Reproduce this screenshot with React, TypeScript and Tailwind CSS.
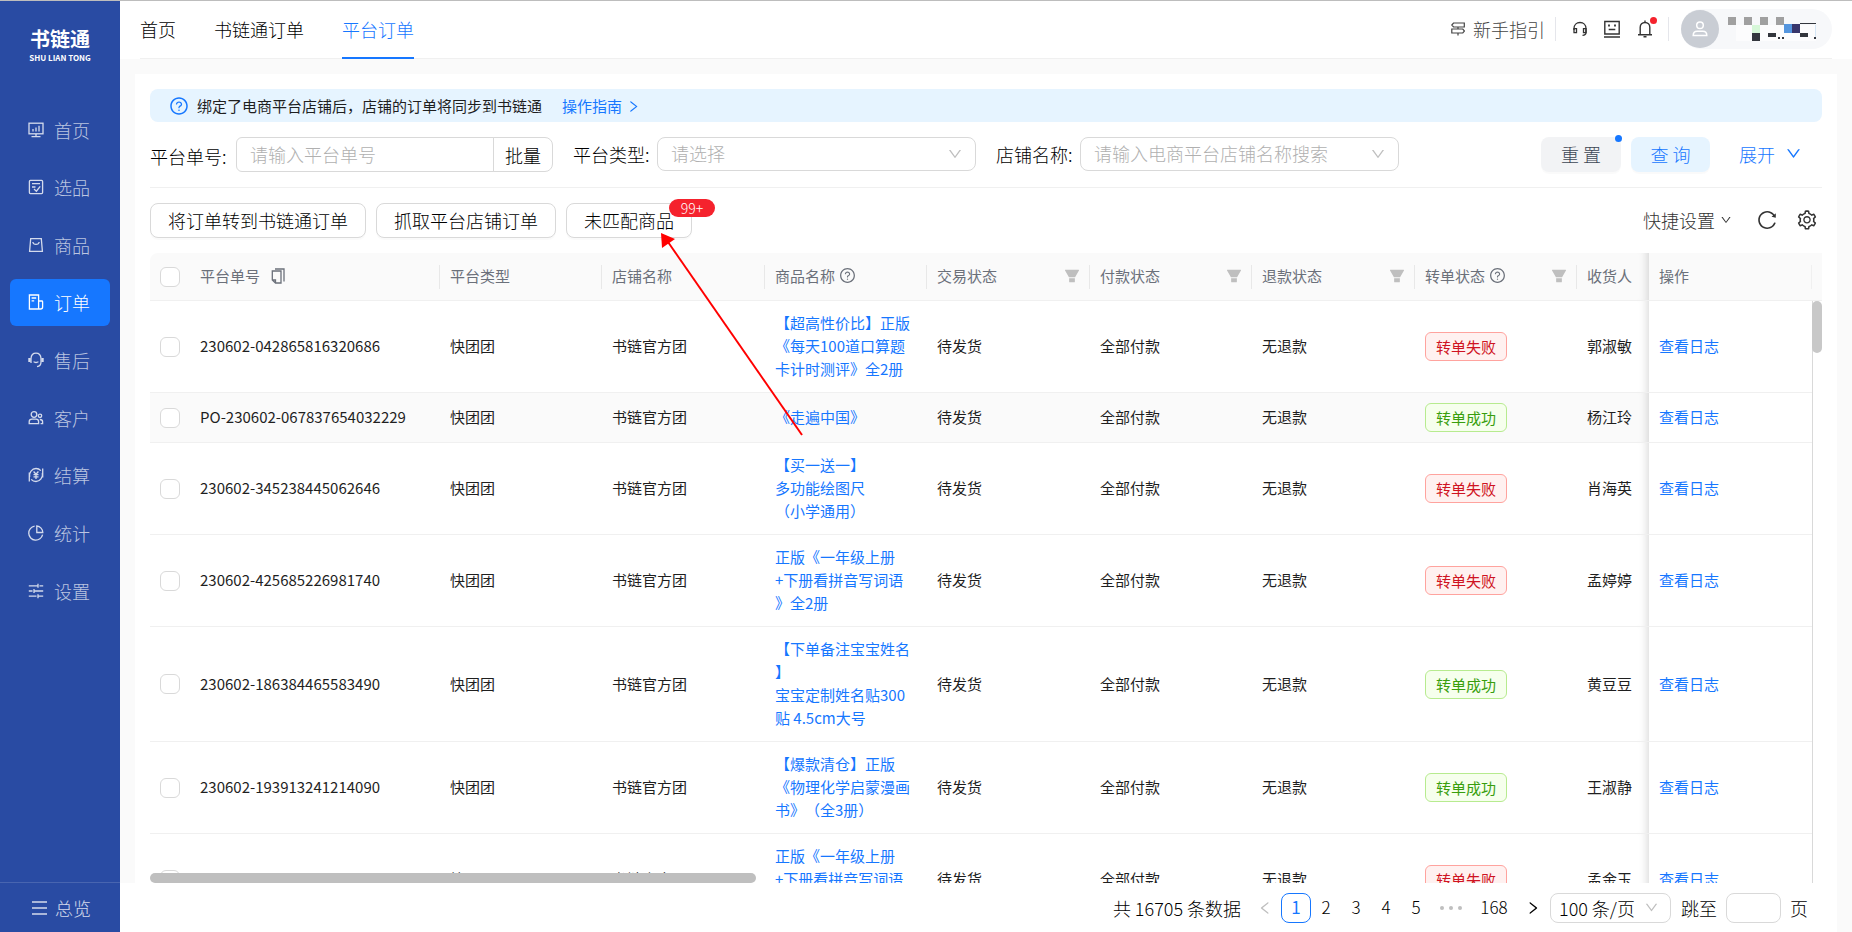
import { useState } from "react";
import type { ReactNode } from "react";
import {
  AiFillFilter,
  AiOutlineDown,
  AiOutlineLeft,
  AiOutlineQuestionCircle,
  AiOutlineReload,
  AiOutlineRight,
  AiOutlineSetting,
} from "react-icons/ai";

const svgProps = {
  width: 16,
  height: 16,
  viewBox: "0 0 16 16",
  fill: "none",
  stroke: "currentColor",
  strokeWidth: 1.3,
  "aria-hidden": true,
} as const;

// 侧边栏菜单
const MENUS: { label: string; icon: ReactNode }[] = [
  {
    label: "首页",
    icon: (
      <svg {...svgProps}>
        <rect x="1" y="1.2" width="14" height="10.6" />
        <path d="M5 9.5V7M8 9.5V5.5M11 9.5V3.8M8 12v2.5M3.5 14.7h9" />
      </svg>
    ),
  },
  {
    label: "选品",
    icon: (
      <svg {...svgProps}>
        <rect x="1.4" y="1.4" width="13.2" height="13.2" rx="1" />
        <path d="M4 4.7h8M4 8h3.5M6 10l2.4 2.2L12.2 7.4" />
      </svg>
    ),
  },
  {
    label: "商品",
    icon: (
      <svg {...svgProps}>
        <path d="M2.7 1.7h10.6l1.1 12.6H1.6zM4.8 5c.6 3.2 5.8 3.2 6.4 0" />
      </svg>
    ),
  },
  {
    label: "订单",
    icon: (
      <svg {...svgProps}>
        <path d="M1.4 1h9.2v14H1.4zM10.6 7h3.2c.5 0 .8.4.8.8V13c0 1.3-.8 2-2 2h-3M3.6 4h4.6M3.6 6.8h2.6" />
      </svg>
    ),
  },
  {
    label: "售后",
    icon: (
      <svg {...svgProps}>
        <path d="M3 11V6.5C3.2 3.5 5.2 1.2 8 1.2s4.8 2.3 5 5.3V10c0 2.8-1.6 4.3-4 4.6" />
        <path d="M1.4 6v4M14.6 6v4" strokeWidth="2.2" />
        <path d="M5.6 9.6c1.2 1.2 3.6 1.2 4.8 0" />
      </svg>
    ),
  },
  {
    label: "客户",
    icon: (
      <svg {...svgProps}>
        <circle cx="6" cy="4.5" r="2.8" />
        <path d="M1.2 13.6v-1.8c0-1.7 1.2-2.6 2.8-2.6h4c1.6 0 2.6.9 2.6 2.6v1.8z" />
        <circle cx="12" cy="5.8" r="1.7" />
        <path d="M11.8 9.5c1.8 0 2.8.8 2.8 2.2v1.9h-2" />
      </svg>
    ),
  },
  {
    label: "结算",
    icon: (
      <svg {...svgProps}>
        <path d="M1.3 5.5v9M1.6 10C.8 5.500 4 1.500 8 1.500c2 0 3.600.8 4.800 2.200M14.700 1.500v9M14.400 6c.8 4.500-2.400 8.500-6.400 8.500-2 0-3.600-.8-4.800-2.200" />
        <path d="M5.600 4.500 8 7.200l2.400-2.700M8 7.200V12M5.500 7.700h5M5.500 9.800h5" />
      </svg>
    ),
  },
  {
    label: "统计",
    icon: (
      <svg {...svgProps}>
        <path d="M6.6 1.2A7 7 0 1 0 14.6 9.6M8.8 1v6.5h6A6.6 6.6 0 0 0 8.8 1z" />
      </svg>
    ),
  },
  {
    label: "设置",
    icon: (
      <svg {...svgProps}>
        <path d="M.8 2.8h9M11.5 2.8h3.7M10 .8v4M.8 8h3.7M6.5 8h8.7M6 6v4M.8 13.2h7.7M10.5 13.2h4.7M10 11.2v4" />
      </svg>
    ),
  },
];

const TABS = ["首页", "书链通订单", "平台订单"];

type Order = {
  no: string;
  product: string[];
  ok: boolean;
  receiver: string;
};

const ORDERS: Order[] = [
  { no: "230602-042865816320686", product: ["【超高性价比】正版", "《每天100道口算题", "卡计时测评》全2册"], ok: false, receiver: "郭淑敏" },
  { no: "PO-230602-067837654032229", product: ["《走遍中国》"], ok: true, receiver: "杨江玲" },
  { no: "230602-345238445062646", product: ["【买一送一】", "多功能绘图尺", "（小学通用）"], ok: false, receiver: "肖海英" },
  { no: "230602-425685226981740", product: ["正版《一年级上册", "+下册看拼音写词语", "》全2册"], ok: false, receiver: "孟婷婷" },
  { no: "230602-186384465583490", product: ["【下单备注宝宝姓名", "】", "宝宝定制姓名贴300", "贴 4.5cm大号"], ok: true, receiver: "黄豆豆" },
  { no: "230602-193913241214090", product: ["【爆款清仓】正版", "《物理化学启蒙漫画", "书》（全3册）"], ok: true, receiver: "王淑静" },
  { no: "230602-518240973316520", product: ["正版《一年级上册", "+下册看拼音写词语", "》全2册"], ok: false, receiver: "孟金玉" },
];

function Sidebar() {
  return (
    <aside className="flex w-[120px] shrink-0 flex-col bg-[#294ba3] text-white/70">
      <div className="flex flex-col items-center pt-6 text-white">
        <span className="text-xl leading-7 font-bold">书链通</span>
        <span className="text-[8px] leading-[10px] font-bold">SHU LIAN TONG</span>
      </div>
      <nav className="mt-[43px] flex h-[508px] flex-col justify-between px-[10px]">
        {MENUS.map((m) => (
          <a
            key={m.label}
            href="#"
            className={
              m.label === "订单"
                ? "flex h-[47px] items-center gap-[10px] rounded-md bg-[#1677ff] pl-[18px] text-lg text-white"
                : "flex h-[47px] items-center gap-[10px] pl-[18px] text-lg"
            }
          >
            <span className={m.label === "订单" ? "text-white" : "text-white/80"}>{m.icon}</span>
            {m.label}
          </a>
        ))}
      </nav>
      <button className="mt-auto flex h-[50px] items-center gap-2 border-t border-white/15 pl-8 text-lg text-white/80">
        <svg width="15" height="16" viewBox="0 0 15 16" stroke="currentColor" strokeWidth="1.3" aria-hidden>
          <path d="M0 2h15M0 8h15M0 14h15" />
        </svg>
        总览
      </button>
    </aside>
  );
}

function TopBar() {
  return (
    <header className="shrink-0 bg-white px-5">
      <div className="flex h-[58px] items-center justify-between border-b border-[#f0f0f0]">
        <nav className="flex h-[58px] gap-[38px] text-lg">
          {TABS.map((t) => (
            <a
              key={t}
              href="#"
              className={
                t === "平台订单"
                  ? "flex items-center border-b-2 border-[#1677ff] text-[#1677ff]"
                  : "flex items-center pb-[2px]"
              }
            >
              {t}
            </a>
          ))}
        </nav>
        <div className="flex items-center pb-[2px] text-[#333]">
          <a href="#" className="flex items-center gap-2 text-lg text-[#444]">
            <svg width="14" height="14" viewBox="0 0 14 14" fill="none" stroke="currentColor" strokeWidth="1.2" aria-hidden>
              <path d="M2.5 1h10.8v4H2.5L.8 3zM11.8 7H.8v4h11l1.7-2zM7 5v2M7 11v2.5" />
            </svg>
            新手指引
          </a>
          <i className="ml-[10px] h-6 w-px bg-[#e5e6eb]" />
          <button aria-label="客服" className="ml-4">
            <svg width="16" height="16" viewBox="0 0 16 16" fill="none" stroke="currentColor" strokeWidth="1.3" aria-hidden>
              <path d="M2 9V7.5C2 4 4.5 1.5 8 1.5S14 4 14 7.5v4c0 1.8-1 2.8-3.5 2.8" />
              <path d="M2 7.7h2.5v4H2zM11.5 7.7H14v4h-2.5z" />
            </svg>
          </button>
          <button aria-label="反馈" className="ml-4">
            <svg width="16" height="18" viewBox="0 0 16 18" fill="none" stroke="currentColor" strokeWidth="1.4" aria-hidden>
              <path d="M.8 1.5h14.4v12.5H.8zM0 17h16M4.7 9.5h6.6" />
              <path d="M5 4.5v2M11 4.5v2" strokeWidth="1.8" />
            </svg>
          </button>
          <button aria-label="通知" className="relative ml-[18px]">
            <svg width="14" height="18" viewBox="0 0 14 18" fill="none" stroke="currentColor" strokeWidth="1.4" aria-hidden>
              <path d="M0 14.7h14M2.2 14.5V7.3C2.2 4.5 4.2 2.5 7 2.5s4.8 2 4.8 4.800v7.200M7 .5v2M5.500 16.800h3" />
            </svg>
            <i className="absolute -top-[3px] -right-[5px] size-[7px] rounded-full bg-[#f5222d]" />
          </button>
          <i className="ml-4 h-6 w-px bg-[#e5e6eb]" />
          <button aria-label="账户" className="ml-3 flex h-10 items-center rounded-full bg-[#f7f8fa] pr-[14px]">
            <span className="flex size-[38px] items-center justify-center rounded-full bg-[#c9cdd4] text-white">
              <svg width="16" height="16" viewBox="0 0 16 16" fill="none" stroke="currentColor" strokeWidth="1.5" aria-hidden>
                <circle cx="8" cy="4.3" r="3.3" />
                <path d="M1.2 14.5c0-3 1.6-4.2 4-4.2h5.6c2.4 0 4 1.2 4 4.2z" />
              </svg>
            </span>
            <svg width="90" height="26" viewBox="0 0 90 26" className="ml-[9px]" aria-hidden>
              <path fill="#a0a0a0" d="M0 1h8v8H0zM16 1h8v8h-8zM32 1h8v8h-8zM48 1h8v8h-8z" />
              <path fill="#fff" fillOpacity="0.6" d="M8 9h80v16H8z" />
              <path fill="#d6f7d8" d="M24 9h8v8h-8z" />
              <path fill="#33363d" d="M24 17h8v8h-8zM40 17h8v4h-8zM72 17h8v4h-8zM50 21h2v2h-2zM54 21h2v2h-2zM86 21h2v2h-2zM72 7h16v1H72z" />
              <path fill="#5596de" d="M56 8h8v9h-8z" />
              <path fill="#38366b" d="M64 8h8v9h-8z" />
              <path stroke="#d5e6f5" d="M87.5 9v12" />
            </svg>
          </button>
        </div>
      </div>
    </header>
  );
}

function SelectField({ id, label, placeholder }: { id: string; label: string; placeholder: string }) {
  return (
    <div className="flex h-[34px] items-center">
      <label htmlFor={id} className="w-[84px] shrink-0 whitespace-nowrap">
        {label}:
      </label>
      <div className="relative flex-1">
        <select
          id={id}
          defaultValue=""
          className="block h-[34px] w-full appearance-none rounded-lg border border-[#d9d9d9] bg-white px-[13px] pb-[2px] text-[#b0b0b0] outline-none"
        >
          <option value="">{placeholder}</option>
        </select>
        <AiOutlineDown className="pointer-events-none absolute top-[9px] right-[13px] size-4 text-[#bfbfbf]" />
      </div>
    </div>
  );
}

function Filters() {
  return (
    <form className="mt-[15px] grid grid-cols-4 gap-5 border-b border-[#f0f0f0] pb-[15px] text-lg" onSubmit={(e) => e.preventDefault()}>
      <div className="flex h-[35px] items-center">
        <label htmlFor="orderNo" className="w-[86px] shrink-0 pt-[2px] whitespace-nowrap">
          平台单号:
        </label>
        <input
          id="orderNo"
          placeholder="请输入平台单号"
          className="h-[35px] min-w-0 flex-1 rounded-l-md border border-[#d9d9d9] px-[13px] pb-[2px] outline-none placeholder:text-[#b0b0b0]"
        />
        <button type="button" className="-ml-px h-[35px] w-[60px] rounded-r-lg border border-[#d9d9d9]">
          批量
        </button>
      </div>
      <SelectField id="platform" label="平台类型" placeholder="请选择" />
      <SelectField id="shop" label="店铺名称" placeholder="请输入电商平台店铺名称搜索" />
      <div className="flex items-center justify-end">
        <button type="reset" className="relative h-[35px] w-20 rounded-lg bg-[#f2f3f5] pb-[2px] text-[#3d4654] shadow-[0_2px_0_rgba(0,0,0,0.02)]">
          重 置
          <i className="absolute -top-[2px] -right-[1px] size-[7px] rounded-full bg-[#1677ff]" />
        </button>
        <button type="submit" className="ml-[10px] h-[35px] w-[79px] rounded-lg bg-[#e6f4ff] pb-[2px] text-[#1677ff] shadow-[0_2px_0_rgba(0,0,0,0.02)]">
          查 询
        </button>
        <button type="button" className="mr-5 ml-[29px] flex items-center gap-[10px] pb-[2px] text-[#1677ff]">
          展开
          <AiOutlineDown className="size-[17px]" />
        </button>
      </div>
    </form>
  );
}

const actionBtn =
  "relative h-[35px] rounded-lg border border-[#d9d9d9] bg-white px-[17px] pb-[2px] shadow-[0_2px_0_rgba(0,0,0,0.02)]";

function Toolbar() {
  return (
    <div className="flex items-center gap-[10px] py-[15px] text-lg">
      <button className={actionBtn}>将订单转到书链通订单</button>
      <button className={actionBtn}>抓取平台店铺订单</button>
      <button className={actionBtn}>
        未匹配商品
        <span className="absolute -top-[5px] -right-6 h-[18px] w-[46px] rounded-full bg-[#f5222d] text-center text-sm leading-[18px] text-white">
          99+
        </span>
      </button>
      <div className="mr-1 ml-auto flex items-center pb-[2px] text-[#333]">
        <button className="flex items-center gap-[5px]">
          快捷设置
          <AiOutlineDown className="size-3" />
        </button>
        <button aria-label="刷新" className="ml-6">
          <AiOutlineReload className="size-[22px]" />
        </button>
        <button aria-label="列设置" className="ml-[18px]">
          <AiOutlineSetting className="size-[22px]" />
        </button>
      </div>
    </div>
  );
}

function Check({ label, checked, onChange }: { label: string; checked: boolean; onChange: () => void }) {
  return (
    <input
      type="checkbox"
      aria-label={label}
      checked={checked}
      onChange={onChange}
      className="block size-5 appearance-none rounded-md border border-[#d9d9d9] bg-white checked:border-[#1677ff] checked:bg-[#1677ff]"
    />
  );
}

function Th({ children, filter }: { children: ReactNode; filter?: boolean }) {
  return (
    <th className="h-12 border-b border-[#f0f0f0] bg-[#fafafa] p-0 text-left font-normal">
      <div className="flex h-6 items-center border-r border-[#e8e8e8] pr-2 pb-[2px] pl-[10px] whitespace-nowrap">
        {children}
        {filter && <AiFillFilter className="ml-auto size-[18px] text-[#bfbfbf]" />}
      </div>
    </th>
  );
}

const td = "border-b border-[#f0f0f0] px-[10px] whitespace-nowrap";
const textTd = `${td} pb-[2px]`;
// 固定列左侧阴影
const pinned =
  "sticky right-0 before:absolute before:inset-y-0 before:-left-[30px] before:w-[30px] before:shadow-[inset_-10px_0_8px_-8px_rgba(5,5,5,0.15)]";

function OrderTable() {
  const [picked, setPicked] = useState<string[]>([]);
  const toggle = (no: string) =>
    setPicked((p) => (p.includes(no) ? p.filter((n) => n !== no) : [...p, no]));
  const all = picked.length === ORDERS.length;

  return (
    <div className="relative min-h-0 flex-1 overflow-hidden rounded-tl-lg">
      <table className="w-full min-w-[1763px] table-fixed border-separate border-spacing-0 text-[15px] leading-[23px] font-normal">
        <colgroup>
          <col className="w-10" />
          <col className="w-[250px]" />
          <col className="w-[162px]" />
          <col className="w-[163px]" />
          <col className="w-[162px]" />
          <col className="w-[163px]" />
          <col className="w-[162px]" />
          <col className="w-[163px]" />
          <col className="w-[162px]" />
          <col className="w-[163px]" />
          <col className="w-[173px]" />
        </colgroup>
        <thead className="text-[#6b707a]">
          <tr>
            <th className="h-12 border-b border-[#f0f0f0] bg-[#fafafa] px-[10px]">
              <Check label="全选" checked={all} onChange={() => setPicked(all ? [] : ORDERS.map((o) => o.no))} />
            </th>
            <Th>
              平台单号
              <svg width="14" height="16" viewBox="0 0 14 16" fill="none" stroke="currentColor" strokeWidth="1.3" className="ml-[11px]" aria-hidden>
                <path d="M4 1h9v12.500M1.300 3h8.700v12H4.500l-3.200-3zM4.500 15v-3H1.300" />
              </svg>
            </Th>
            <Th>平台类型</Th>
            <Th>店铺名称</Th>
            <Th>
              商品名称
              <AiOutlineQuestionCircle className="ml-1 size-[17px]" />
            </Th>
            <Th filter>交易状态</Th>
            <Th filter>付款状态</Th>
            <Th filter>退款状态</Th>
            <Th filter>
              转单状态
              <AiOutlineQuestionCircle className="ml-1 size-[17px]" />
            </Th>
            <Th>收货人</Th>
            <th className={`h-12 border-b border-[#f0f0f0] bg-[#fafafa] pr-[10px] text-left font-normal ${pinned}`}>
              <div className="flex h-6 items-center border-r border-[#f0f0f0] pb-[2px] pl-[10px]">操作</div>
            </th>
          </tr>
        </thead>
        <tbody className="text-[#1f1f1f]">
          {ORDERS.map((o, i) => (
            <tr key={o.no} className={i === 1 ? "bg-[#fafafa]" : "bg-white"}>
              <td className={td}>
                <Check label={o.no} checked={picked.includes(o.no)} onChange={() => toggle(o.no)} />
              </td>
              <td className={textTd}>{o.no}</td>
              <td className={textTd}>快团团</td>
              <td className={textTd}>书链官方团</td>
              <td className={`${td} pt-[10px] pb-3`}>
                <a href="#" className="block text-[#1677ff] [text-spacing-trim:space-all]">
                  {o.product.map((line) => (
                    <span key={line} className="block">
                      {line}
                    </span>
                  ))}
                </a>
              </td>
              <td className={textTd}>待发货</td>
              <td className={textTd}>全部付款</td>
              <td className={textTd}>无退款</td>
              <td className={`${td} py-[10px]`}>
                <span
                  className={
                    o.ok
                      ? "block w-[82px] rounded-md border border-[#b7eb8f] bg-[#f6ffed] text-center leading-[27px] text-[#389e0d]"
                      : "block w-[82px] rounded-md border border-[#ffa39e] bg-[#fff1f0] text-center leading-[27px] text-[#cf1322]"
                  }
                >
                  {o.ok ? "转单成功" : "转单失败"}
                </span>
              </td>
              <td className={textTd}>{o.receiver}</td>
              <td className={`${textTd} bg-white ${pinned}`}>
                <a href="#" className="text-[#1677ff]">
                  查看日志
                </a>
              </td>
            </tr>
          ))}
        </tbody>
      </table>
      <div className="absolute top-12 right-0 bottom-0 w-[10px] bg-white">
        <div className="h-full border-l border-[#d9d9d9]" />
        <div className="absolute top-0 right-0 h-[52px] w-[10px] rounded-full bg-[#c8c8c8]" />
      </div>
      <div className="absolute bottom-0 left-0 h-[10px] w-[606px] rounded-full bg-[#bfbfbf]" />
    </div>
  );
}

function Pagination() {
  return (
    <footer className="flex h-[49px] shrink-0 items-center justify-end bg-white pr-[29px] text-lg">
      <span>共 16705 条数据</span>
      <button aria-label="上一页" className="ml-4 w-[18px] text-[#bfbfbf]">
        <AiOutlineLeft className="size-4" />
      </button>
      <ul className="ml-[6px] flex items-center">
        {["1", "2", "3", "4", "5"].map((p) => (
          <li key={p}>
            <button
              className={
                p === "1"
                  ? "size-[30px] rounded-lg border border-[#1677ff] text-[17px] font-normal text-[#1677ff]"
                  : "size-[30px] text-[17px]"
              }
            >
              {p}
            </button>
          </li>
        ))}
        <li className="flex w-10 justify-center gap-[5px]">
          <i className="size-1 rounded-full bg-[#bfbfbf]" />
          <i className="size-1 rounded-full bg-[#bfbfbf]" />
          <i className="size-1 rounded-full bg-[#bfbfbf]" />
        </li>
        <li>
          <button className="h-[30px] w-[46px] text-[17px]">168</button>
        </li>
      </ul>
      <button aria-label="下一页" className="ml-2">
        <AiOutlineRight className="size-4" />
      </button>
      <div className="relative ml-[9px]">
        <select aria-label="每页条数" className="block h-[30px] w-[121px] appearance-none rounded-lg border border-[#d9d9d9] bg-white pl-2 text-lg outline-none">
          <option>100 条/页</option>
        </select>
        <AiOutlineDown className="pointer-events-none absolute top-[7px] right-3 size-[15px] text-[#bfbfbf]" />
      </div>
      <label htmlFor="jump" className="ml-[10px]">
        跳至
      </label>
      <input id="jump" className="mx-[9px] h-[30px] w-[55px] rounded-lg border border-[#d9d9d9] px-2 outline-none" />
      <span>页</span>
    </footer>
  );
}

export default function App() {
  return (
    <div
      lang="zh-CN"
      className="flex h-screen flex-col overflow-hidden border-t border-[#bdbdbd] bg-[#fafafa] font-['Noto_Sans_CJK_SC',sans-serif] font-light text-black"
    >
      <div className="relative flex min-h-0 flex-1">
        <Sidebar />
        <div className="flex min-w-0 flex-1 flex-col">
          <TopBar />
          <div className="flex min-h-0 flex-1 flex-col pr-[15px]">
            <main className="mt-[15px] ml-[15px] flex min-h-0 flex-1 flex-col bg-white px-[15px] pt-[15px]">
              <div className="flex h-[33px] shrink-0 items-center rounded-lg bg-[#e6f4ff] pl-[19px] text-[15px] font-normal text-[#1f1f1f]">
                <AiOutlineQuestionCircle className="size-5 text-[#1677ff]" />
                <span className="ml-2 pt-[2px]">绑定了电商平台店铺后，店铺的订单将同步到书链通</span>
                <a href="#" className="ml-5 flex items-center gap-1 pt-[2px] text-[#1677ff]">
                  操作指南
                  <AiOutlineRight className="size-[15px]" />
                </a>
              </div>
              <Filters />
              <Toolbar />
              <OrderTable />
            </main>
            <Pagination />
          </div>
        </div>
        {/* 指向“未匹配商品”的标注箭头 */}
        <svg width="144" height="204" viewBox="0 0 144 204" className="pointer-events-none absolute top-[232px] left-[660px]" aria-hidden>
          <path d="M8 9 142 202" stroke="#f00" strokeWidth="2" />
          <path d="M1 0 15 6 2 15z" fill="#f00" />
        </svg>
      </div>
    </div>
  );
}
